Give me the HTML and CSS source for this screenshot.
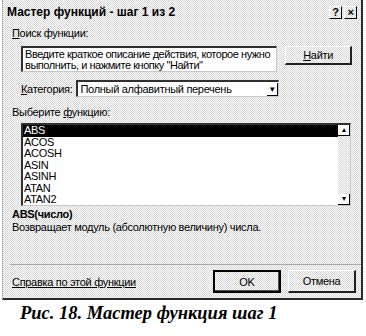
FILE: index.html
```html
<!DOCTYPE html>
<html lang="ru">
<head>
  <meta charset="UTF-8" />
  <title>Мастер функций</title>
  <link rel="stylesheet" href="styles.css">
</head>
<body>
  <div class="dialog">
    <div class="titlebar">
      <span class="title">Мастер функций - шаг 1 из 2</span>
      <div class="tb-btns">
        <span class="tb-btn">?</span>
        <span class="tb-btn">×</span>
      </div>
    </div>

    <div class="content">
      <div class="label"><u>П</u>оиск функции:</div>
      <div class="search-row">
        <div class="textbox">Введите краткое описание действия, которое нужно<br>выполнить, и нажмите кнопку "Найти"</div>
        <button class="btn find-btn"><u>Н</u>айти</button>
      </div>

      <div class="cat-row">
        <span><u>К</u>атегория:</span>
        <div class="select">
          <span class="select-text">Полный алфавитный перечень</span>
          <span class="select-arrow">▾</span>
        </div>
      </div>

      <div class="label pick-label">Выберите <u>ф</u>ункцию:</div>
      <div class="listbox">
        <ul class="items">
          <li class="selected">ABS</li>
          <li>ACOS</li>
          <li>ACOSH</li>
          <li>ASIN</li>
          <li>ASINH</li>
          <li>ATAN</li>
          <li>ATAN2</li>
        </ul>
        <div class="scrollbar">
          <span class="sb-btn">▴</span>
          <span class="sb-track"></span>
          <span class="sb-btn">▾</span>
        </div>
      </div>

      <div class="sig">ABS(число)</div>
      <div class="desc">Возвращает модуль (абсолютную величину) числа.</div>
    </div>

    <div class="footer">
      <a class="help" href="#">Справка по этой функции</a>
      <div class="footer-btns">
        <button class="btn default-btn">OK</button>
        <button class="btn">Отмена</button>
      </div>
    </div>
  </div>

  <p class="caption">Рис. 18. Мастер функция шаг 1</p>
</body>
</html>
```

FILE: styles.css
```css
body {
  margin: 0;
  background: #fff;
  font-family: "Liberation Sans", Arial, sans-serif;
  font-size: 11px;
  letter-spacing: -0.3px;
  color: #000;
}
.dialog {
  width: 358px;
  height: 298px;
  margin-left: 2px;
  border-left: 1px dotted #9a9a9a;
  border-right: 2px solid #2a2a2a;
  border-bottom: 2px solid #2a2a2a;
  background: repeating-conic-gradient(#d4d4d4 0 25%, #fff 0 50%) 0 0 / 2px 2px;
  display: flex;
  flex-direction: column;
}
.titlebar {
  height: 24px;
  display: flex;
  align-items: center;
  justify-content: space-between;
  padding: 0 4px 0 4px;
}
.title {
  font-weight: bold;
  font-size: 12px;
  letter-spacing: 0;
}
.tb-btns {
  display: flex;
  gap: 2px;
}
.tb-btn {
  width: 11px;
  height: 11px;
  border-right: 1px solid #000;
  border-bottom: 1px solid #000;
  border-top: 1px solid #fff;
  border-left: 1px solid #fff;
  font-size: 11px;
  font-weight: bold;
  line-height: 11px;
  text-align: center;
}
.content {
  padding: 0 9px 0 9px;
}
.label {
  margin-top: 3px;
  line-height: 12px;
}
.search-row {
  display: flex;
  align-items: flex-start;
  margin: 7px 0 0 9px;
  gap: 8px;
}
.textbox {
  width: 255px;
  height: 21px;
  background: #fff;
  border-top: 2px solid #303030;
  border-left: 2px solid #303030;
  border-right: 1px solid #c8c8c8;
  border-bottom: 1px solid #c8c8c8;
  padding: 1px 1px 1px 2px;
  line-height: 10.5px;
  letter-spacing: -0.45px;
  white-space: nowrap;
  overflow: hidden;
}
.btn {
  font-family: "Liberation Sans", Arial, sans-serif;
  font-size: 11px;
  letter-spacing: -0.3px;
  color: #000;
  background: transparent;
  border-top: 1px solid #fff;
  border-left: 1px solid #fff;
  border-right: 2px solid #202020;
  border-bottom: 2px solid #202020;
  width: 68px;
  height: 23px;
  padding: 0;
}
.find-btn {
  height: 19px;
}
.cat-row {
  display: flex;
  align-items: center;
  gap: 4px;
  margin: 8px 0 0 9px;
}
.select {
  width: 198px;
  height: 14px;
  background: #fff;
  border-top: 2px solid #303030;
  border-left: 2px solid #303030;
  border-right: 1px solid #c8c8c8;
  border-bottom: 1px solid #c8c8c8;
  display: flex;
  align-items: center;
  justify-content: space-between;
  padding-left: 2px;
}
.select-arrow {
  width: 10px;
  height: 12px;
  border-right: 1px solid #000;
  border-bottom: 1px solid #000;
  font-size: 9px;
  line-height: 12px;
  text-align: center;
}
.pick-label {
  margin-top: 9px;
}
.listbox {
  margin: 5px 0 0 9px;
  width: 327px;
  height: 80px;
  background: #fff;
  border-top: 2px solid #303030;
  border-left: 2px solid #303030;
  border-right: 1px solid #c8c8c8;
  border-bottom: 1px solid #c8c8c8;
  display: flex;
}
.items {
  list-style: none;
  margin: 0;
  padding: 0;
  flex: 1;
}
.items li {
  height: 11.5px;
  line-height: 11.5px;
  padding-left: 1px;
}
.items li.selected {
  background: #000;
  color: #fff;
}
.scrollbar {
  width: 12px;
  display: flex;
  flex-direction: column;
}
.sb-btn {
  height: 10px;
  border-right: 1px solid #000;
  border-bottom: 1px solid #000;
  background: #fff;
  font-size: 8px;
  line-height: 10px;
  text-align: center;
}
.sb-track {
  flex: 1;
  background: repeating-conic-gradient(#d4d4d4 0 25%, #fff 0 50%) 0 0 / 2px 2px;
}
.sig {
  font-weight: bold;
  margin-top: 2px;
  line-height: 13px;
}
.desc {
  line-height: 13px;
}
.footer {
  margin-top: auto;
  border-top: 1px solid #a8a8a8;
  margin-left: 7px;
  padding: 5px 5px 5px 2px;
  display: flex;
  align-items: center;
  justify-content: space-between;
}
.help {
  color: #000;
  text-decoration: underline;
}
.footer-btns {
  display: flex;
  gap: 7px;
}
.default-btn {
  border: 2px solid #000;
  box-shadow: inset -1px -1px 0 #555;
}
.caption {
  margin: 3px 0 0 20px;
  font-family: "Liberation Serif", "Times New Roman", serif;
  font-size: 18.5px;
  font-weight: bold;
  font-style: italic;
  letter-spacing: 0;
}
```
